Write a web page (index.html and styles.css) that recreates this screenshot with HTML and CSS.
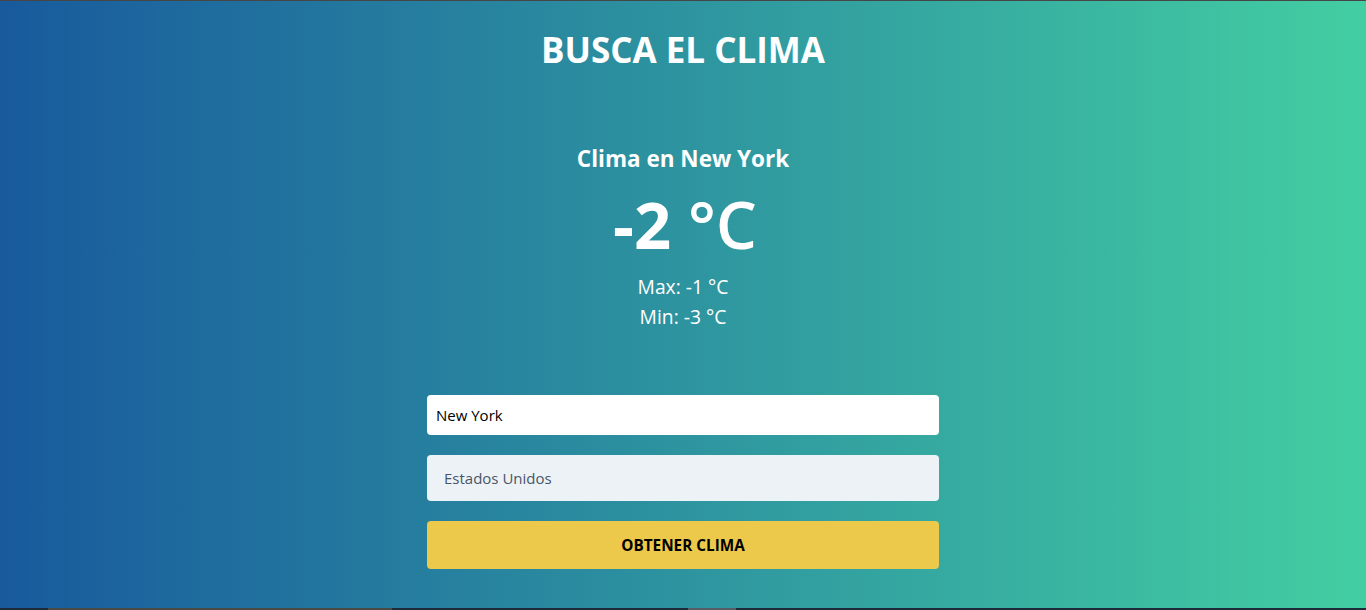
FILE: index.html
```html
<!DOCTYPE html>
<html lang="es">
<head>
<meta charset="utf-8">
<title>Busca el clima</title>
<link rel="stylesheet" href="styles.css">
</head>
<body>
<div class="page">
  <header class="header">
    <h1 class="title">BUSCA EL CLIMA</h1>
  </header>
  <main class="main">
    <section class="weather">
      <h2 class="weather-city">Clima en New York</h2>
      <p class="weather-temp">-2 <span class="weather-unit">°C</span></p>
      <p class="weather-range weather-max">Max: -1 °C</p>
      <p class="weather-range">Min: -3 °C</p>
    </section>
    <form class="form">
      <input class="field field-city" type="text" value="New York">
      <div class="field field-country">Estados Unidos</div>
      <button class="btn" type="button">OBTENER CLIMA</button>
    </form>
  </main>
  <div class="bottom-bar">
    <span class="seg seg-a"></span>
    <span class="seg seg-b"></span>
  </div>
</div>
</body>
</html>
```
FILE: styles.css
```css
* { box-sizing: border-box; }
html, body { margin: 0; padding: 0; height: 100%; }
body {
  font-family: "Open Sans", "Noto Sans", sans-serif;
  color: #fff;
  background: linear-gradient(to right, #185a9d, #43cea2);
}
.page {
  height: 610px;
  border-top: 1px solid #464646;
  display: flex;
  flex-direction: column;
}
.header {
  padding-top: 26px;
  text-align: center;
}
.title {
  margin: 0;
  font-size: 35px;
  line-height: 46px;
  font-weight: 700;
}
.main {
  flex: 1;
  display: flex;
  flex-direction: column;
  align-items: center;
}
.weather {
  margin-top: 70px;
  margin-left: 4px;
  text-align: center;
}
.weather-city {
  margin: 0 0 0 -4px;
  font-size: 22.5px;
  line-height: 32px;
  font-weight: 700;
}
.weather-temp {
  margin: 13px 0 0;
  font-size: 65px;
  line-height: 72px;
  font-weight: 700;
}
.weather-unit { font-weight: 600; }
.weather-range {
  margin: 0 0 0 -4px;
  font-size: 19.3px;
  line-height: 30px;
}
.weather-max { margin-top: 12px; }
.form {
  margin-top: 63px;
  width: 512px;
  display: flex;
  flex-direction: column;
  gap: 20px;
}
.field {
  font-family: inherit;
  font-size: 15px;
  border: none;
  border-radius: 4px;
  width: 100%;
  outline: none;
}
.field-city {
  height: 40px;
  padding: 0 9px;
  background: #fff;
  color: #000;
}
.field-country {
  height: 46px;
  padding: 0 17px;
  display: flex;
  align-items: center;
  background: #edf2f7;
  color: #4a5568;
}
.btn {
  height: 48px;
  border: none;
  border-radius: 4px;
  background: #ecc94b;
  color: #000;
  font-family: inherit;
  font-size: 15.3px;
  font-weight: 700;
  cursor: pointer;
}
.bottom-bar {
  height: 2px;
  background: #1e2c38;
  display: flex;
}
.seg { height: 2px; display: block; }
.seg-a { margin-left: 48px; width: 344px; background: #4a4a44; }
.seg-b { margin-left: 296px; width: 48px; background: #555d66; }
```
